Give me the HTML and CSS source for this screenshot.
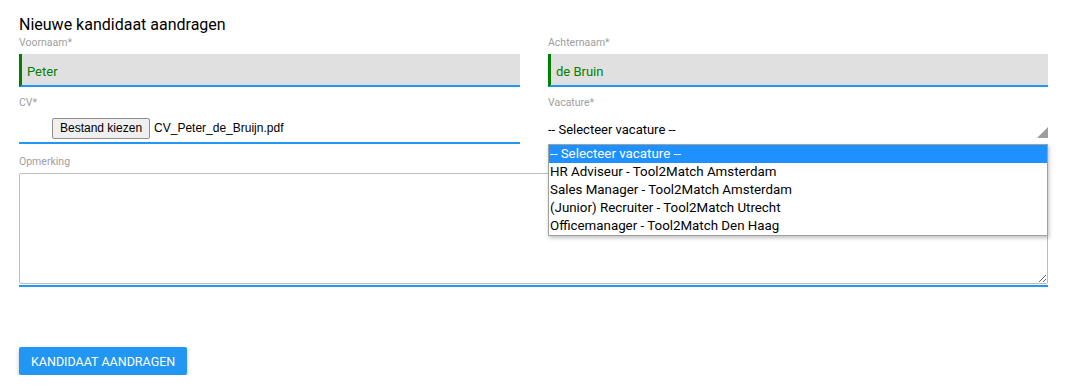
FILE: index.html
```html
<!DOCTYPE html>
<html>
<head>
  <meta charset="utf-8">
  <title>Nieuwe kandidaat aandragen</title>
  <link rel="stylesheet" href="styles.css">
</head>
<body>
  <div class="container">
    <h1>Nieuwe kandidaat aandragen</h1>

    <form class="candidate-form" onSubmit="return false">
      <div class="row">
        <div class="field">
          <label for="voornaam">Voornaam*</label>
          <input class="text-input valid" id="voornaam" type="text" value="Peter">
        </div>
        <div class="field">
          <label for="achternaam">Achternaam*</label>
          <input class="text-input valid" id="achternaam" type="text" value="de Bruin">
        </div>

        <div class="field">
          <label>CV*</label>
          <div class="file-input">
            <button type="button" class="file-button">Bestand kiezen</button>
            <span class="file-name">CV_Peter_de_Bruijn.pdf</span>
          </div>
        </div>
        <div class="field">
          <label>Vacature*</label>
          <div class="select">
            <span class="select-value">-- Selecteer vacature --</span>
            <span class="select-arrow"></span>
            <ul class="select-options">
              <li class="selected">-- Selecteer vacature --</li>
              <li>HR Adviseur - Tool2Match Amsterdam</li>
              <li>Sales Manager - Tool2Match Amsterdam</li>
              <li>(Junior) Recruiter - Tool2Match Utrecht</li>
              <li>Officemanager - Tool2Match Den Haag</li>
            </ul>
          </div>
        </div>
      </div>

      <div class="field wide">
        <label for="opmerking">Opmerking</label>
        <div class="textarea-wrap">
          <textarea id="opmerking"></textarea>
        </div>
      </div>

      <button type="submit" class="submit-button">Kandidaat aandragen</button>
    </form>
  </div>
</body>
</html>
```

FILE: styles.css
```css
body {
  margin: 0;
  font-family: Roboto, "Liberation Sans", Arial, sans-serif;
  color: #000;
  background: #fff;
}

.container {
  padding: 15px 18px 0 19px;
}

h1 {
  margin: 0;
  font-size: 16px;
  font-weight: 400;
  line-height: 19px;
}

.row {
  display: grid;
  grid-template-columns: 501px 500px;
  column-gap: 28px;
}

.field {
  display: flex;
  flex-direction: column;
  margin-bottom: 7px;
}

.field label {
  font-size: 10.5px;
  line-height: 16px;
  color: #9e9e9e;
  padding-top: 1px;
}

.text-input {
  box-sizing: border-box;
  margin-top: 3px;
  height: 33px;
  border: 0;
  border-left: 3px solid #008000;
  border-bottom: 2px solid #2196f3;
  background: #e0e0e0;
  padding: 3px 0 0 5px;
  font-family: inherit;
  font-size: 13px;
  color: #008000;
  outline: none;
}

.file-input {
  box-sizing: border-box;
  height: 33px;
  display: flex;
  align-items: center;
  padding: 3px 0 0 33px;
  border-bottom: 2px solid #2196f3;
}

.file-button {
  font-family: "Liberation Sans", Arial, sans-serif;
  font-size: 12px;
  height: 21px;
  padding: 0 7px;
  border: 1px solid #8f8f8f;
  border-radius: 2px;
  background: #efefef;
  color: #000;
}

.file-name {
  font-family: "Liberation Sans", Arial, sans-serif;
  font-size: 12px;
  margin-left: 4px;
}

.select {
  position: relative;
  box-sizing: border-box;
  height: 33px;
  display: flex;
  align-items: center;
  padding-top: 3px;
  font-size: 13px;
}

.select-arrow {
  position: absolute;
  right: 0;
  top: 16px;
  width: 0;
  height: 0;
  border-left: 11px solid transparent;
  border-bottom: 11px solid #9e9e9e;
}

.select-options {
  position: absolute;
  left: 0;
  right: 0;
  top: 33px;
  margin: 0;
  padding: 0;
  list-style: none;
  background: #fff;
  border: 1px solid #a0a0a0;
  box-shadow: 1px 2px 4px rgba(0, 0, 0, 0.25);
  z-index: 2;
}

.select-options li {
  height: 18px;
  line-height: 18px;
  padding-left: 1px;
  font-size: 13.33px;
}

.select-options li.selected {
  background: #1e90ff;
  color: #fff;
}

.wide {
  margin-top: 2px;
}

.textarea-wrap {
  margin-top: 3px;
  border-bottom: 2px solid #2196f3;
  padding-bottom: 1px;
}

.textarea-wrap textarea {
  display: block;
  box-sizing: border-box;
  width: 100%;
  height: 111px;
  border: 1px solid #bdbdbd;
  border-radius: 2px;
  margin: 0;
  font-family: inherit;
}

.submit-button {
  margin-top: 53px;
  height: 28px;
  padding: 0 12px;
  border: 0;
  border-radius: 2px;
  background: #2196f3;
  color: #fff;
  font-family: Roboto, Arial, sans-serif;
  font-size: 12.5px;
  text-transform: uppercase;
  box-shadow: 0 2px 4px rgba(0, 0, 0, 0.25);
}
```
